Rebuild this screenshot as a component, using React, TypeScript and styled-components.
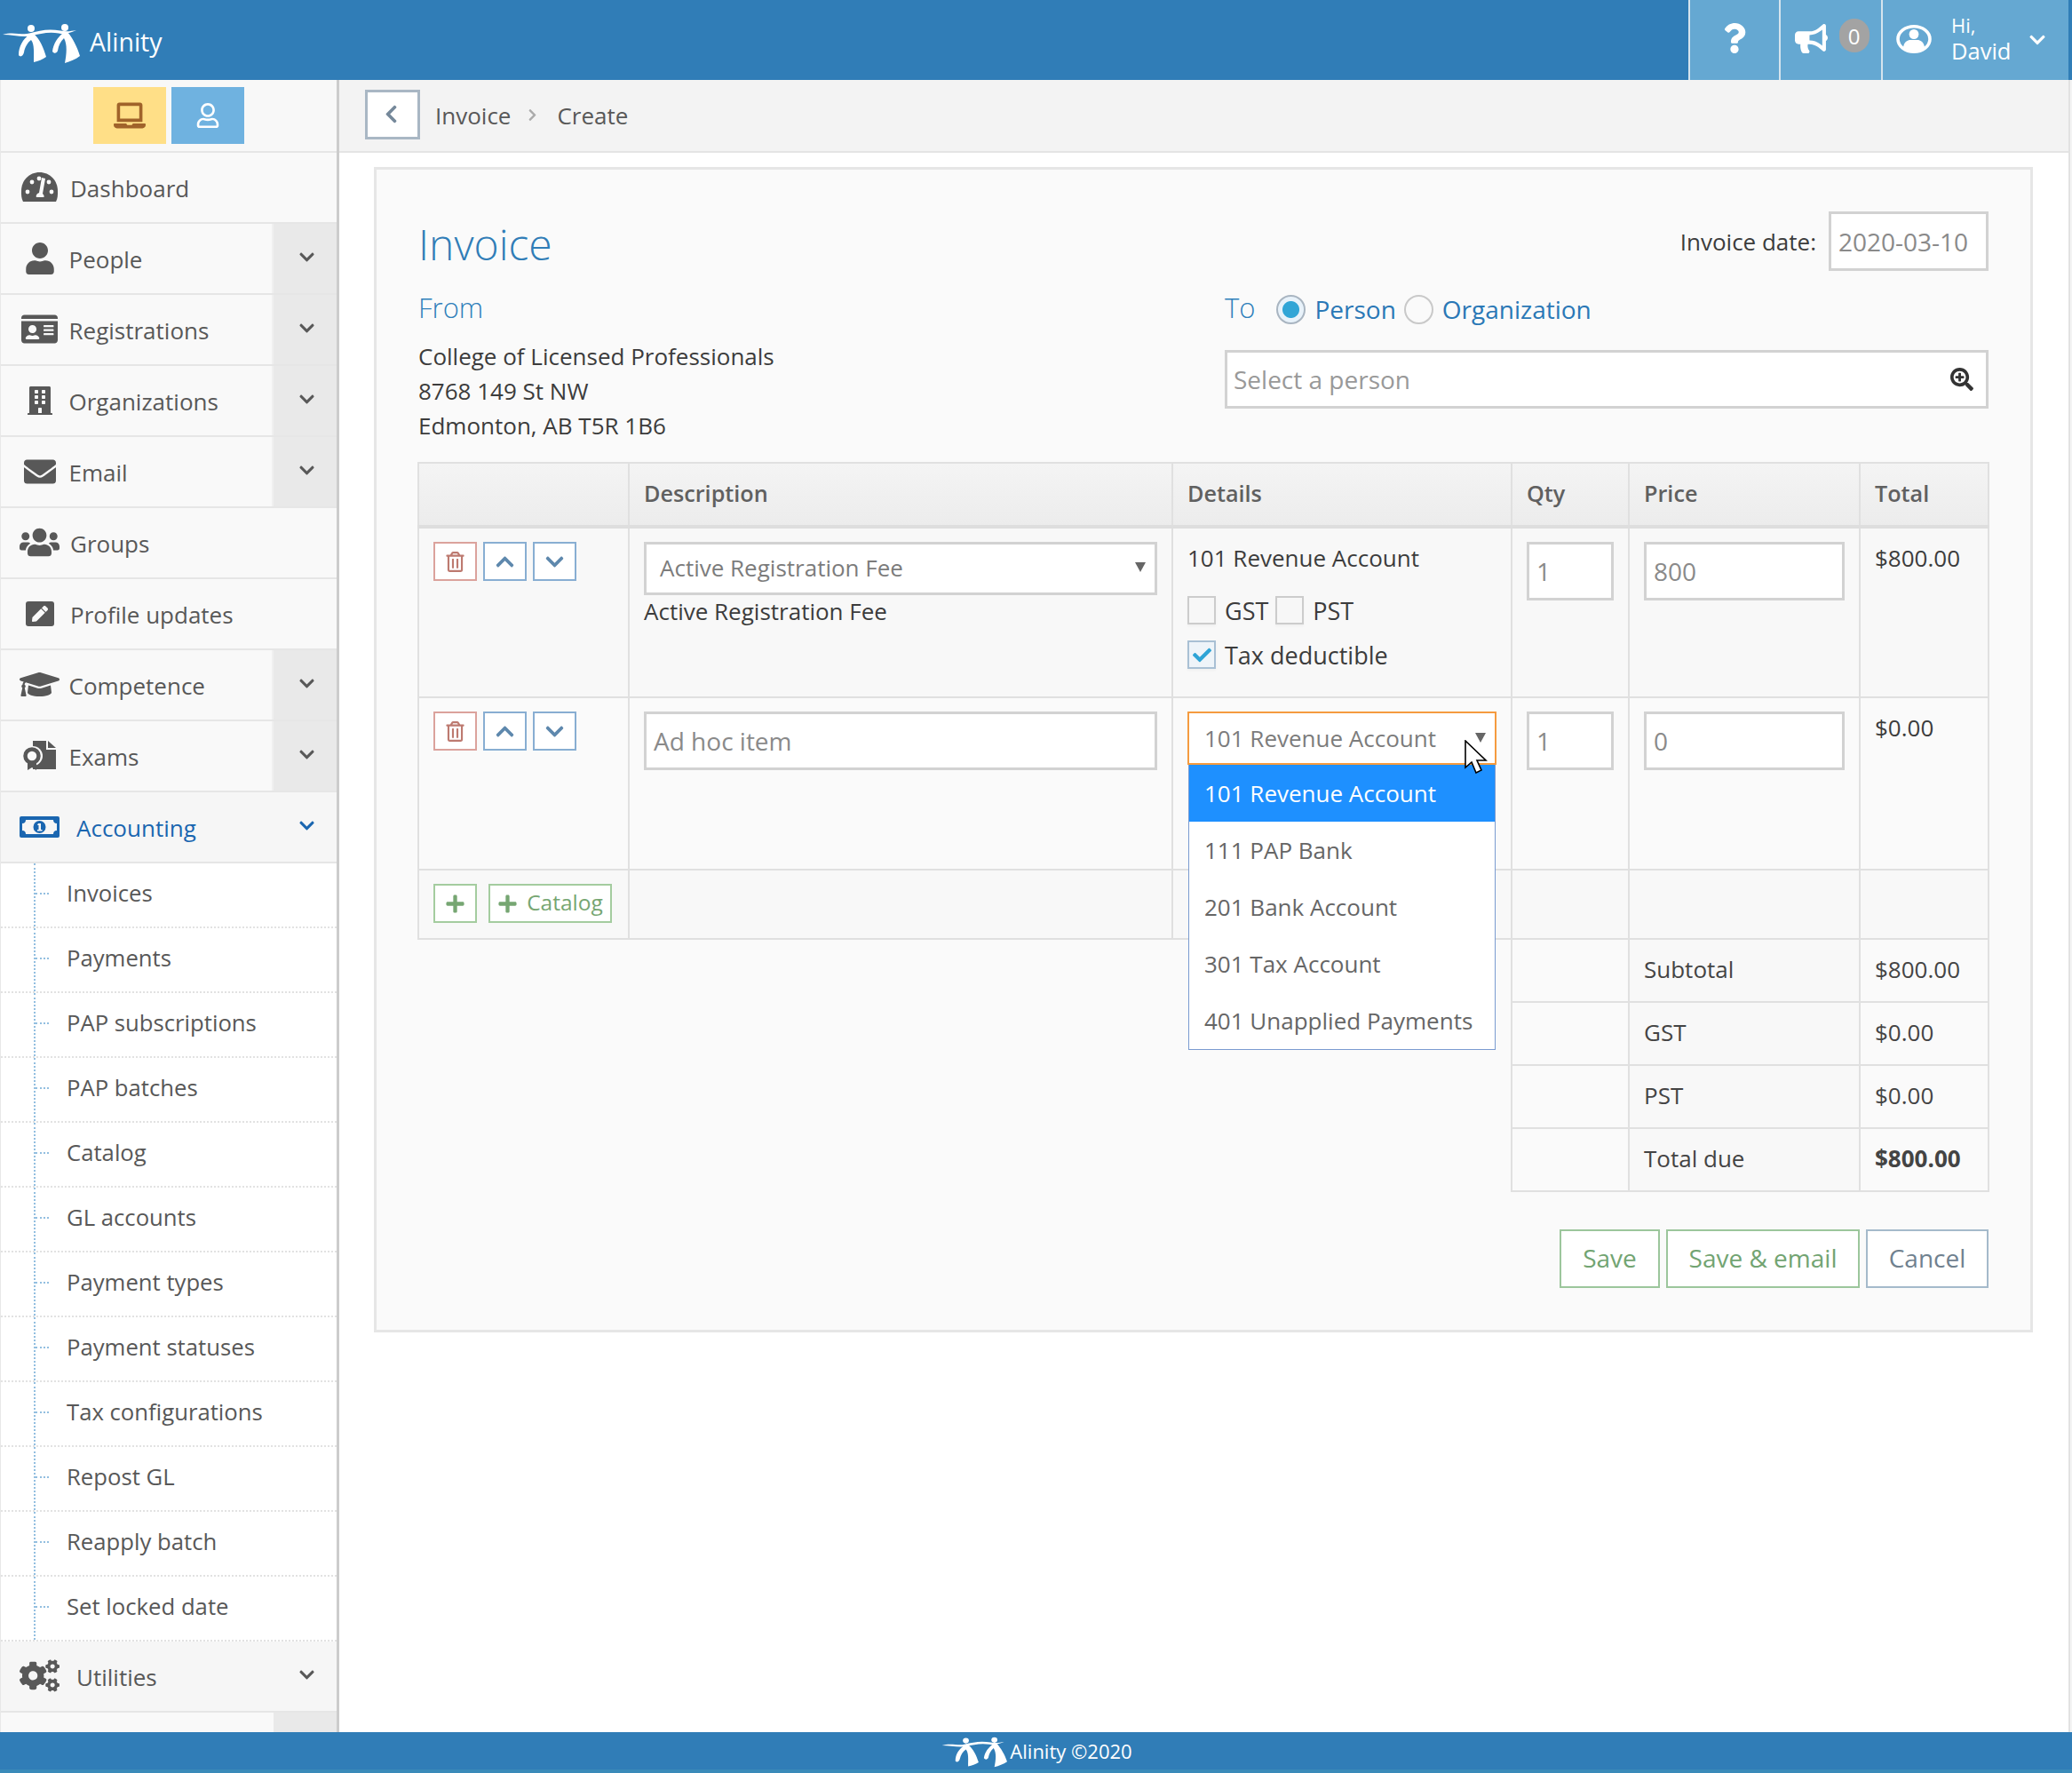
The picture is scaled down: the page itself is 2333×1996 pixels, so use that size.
import React from 'react';
import styled, { createGlobalStyle } from 'styled-components';
import {
  FaUser, FaIdCard, FaBuilding, FaEnvelope, FaUsers, FaPen, FaGraduationCap, FaCogs,
  FaChevronDown, FaChevronUp, FaChevronLeft, FaChevronRight, FaQuestion, FaBullhorn,
  FaSearchPlus, FaLaptop, FaRegUser, FaRegTrashAlt, FaPlus, FaCheck,
} from 'react-icons/fa';

const GlobalStyle = createGlobalStyle`
  html, body { margin: 0; padding: 0; background: #fff; }
  * { box-sizing: border-box; }
  body { font-family: "Open Sans", "Liberation Sans", sans-serif; color: #3c3c3c; }
`;

const BLUE = '#307db7';
const INK = '#585858';

const Page = styled.div`
  width: 2333px;
  height: 1996px;
  display: flex;
  flex-direction: column;
  overflow: hidden;
`;

const Header = styled.header`
  height: 90px;
  flex: none;
  display: flex;
  align-items: stretch;
  background: ${BLUE};
  padding-right: 4px;
  color: #fff;
`;

const Brand = styled.div`
  display: flex;
  align-items: center;
  gap: 11px;
  padding-top: 3px;
  font-size: 28.5px;
  flex: 1;
`;

const HeadBox = styled.div<{ $w: number }>`
  width: ${(p) => p.$w}px;
  background: #65a8d2;
  border-left: 2px solid #d5e4ee;
  display: flex;
  align-items: center;
  position: relative;
`;

const QuestionBox = styled(HeadBox)`
  justify-content: center;
  font-size: 34px;
  padding-bottom: 4px;
`;

const HornBox = styled(HeadBox)`
  font-size: 37px;
  padding: 0 0 4px 16px;
`;

const Count = styled.span`
  position: absolute;
  left: 66px;
  top: 21px;
  width: 34px;
  height: 38px;
  border-radius: 17px;
  background: #a3a3a3;
  font-size: 24px;
  display: flex;
  align-items: center;
  justify-content: center;
`;

const UserBox = styled(HeadBox)`
  padding-left: 15.5px;
  font-size: 20px;
`;

const Ring = styled.svg`
  width: 40px;
  height: 32px;
  flex: none;
  margin-bottom: 3px;
`;

const Greeting = styled.div`
  margin-left: 22px;
  width: 87px;
  display: flex;
  flex-direction: column;
  font-size: 22px;
  line-height: 27px;
  padding-bottom: 4px;

  b {
    font-weight: 400;
    font-size: 25.5px;
    line-height: 30px;
  }
`;

const Body = styled.div`
  flex: 1;
  display: flex;
  min-height: 0;
`;

const Sidebar = styled.nav`
  width: 382px;
  flex: none;
  border-right: 3px solid #ccc;
  border-left: 1px solid #e8e8e8;
  display: flex;
  flex-direction: column;
  overflow: hidden;
`;

const Modes = styled.div`
  height: 82px;
  flex: none;
  display: flex;
  justify-content: center;
  gap: 6px;
  padding: 8px 1px 0 0;
  background: #f8f8f8;
  border-bottom: 2px solid #e6e6e6;
`;

const ModeButton = styled.div<{ $bg: string; $fg: string; $size: number }>`
  width: 82px;
  height: 64px;
  background: ${(p) => p.$bg};
  color: ${(p) => p.$fg};
  font-size: ${(p) => p.$size}px;
  display: flex;
  align-items: center;
  justify-content: center;
`;

const NavRow = styled.div<{ $open?: boolean; $blue?: boolean }>`
  height: 80px;
  flex: none;
  display: flex;
  border-bottom: 2px solid #e6e6e6;
  background: ${(p) => (p.$open ? '#f6f6f6' : '#f9f9f9')};
  color: ${(p) => (p.$blue ? '#1a66b0' : INK)};
`;

const NavMain = styled.div<{ $wide?: boolean }>`
  flex: 1;
  display: flex;
  align-items: center;
  font-size: 26px;
  padding-top: 2px;
  border-right: ${(p) => (p.$wide ? 'none' : '2px solid #f0f0f0')};
`;

const NavIcon = styled.span<{ $size?: number; $tight?: boolean }>`
  width: ${(p) => (p.$tight ? 76.5 : 78)}px;
  flex: none;
  padding: 0 ${(p) => (p.$tight ? 9.5 : 11)}px 0 20px;
  margin-top: -3px;
  display: flex;
  justify-content: center;
  align-items: center;
  font-size: ${(p) => p.$size ?? 36}px;
`;

const NavLabel = styled.span<{ $indent?: boolean }>`
  margin-left: ${(p) => (p.$indent ? 7 : 0)}px;
`;

const NavToggle = styled.div<{ $plain?: boolean }>`
  width: 71px;
  flex: none;
  display: flex;
  align-items: center;
  justify-content: center;
  font-size: 19px;
  padding: 0 0 3px 3px;
  background: ${(p) => (p.$plain ? 'transparent' : '#e9e9e9')};
`;

const PenBox = styled.span`
  width: 32px;
  height: 28px;
  border-radius: 3px;
  background: ${INK};
  color: #f9f9f9;
  font-size: 18px;
  display: flex;
  align-items: center;
  justify-content: center;
`;

const SubList = styled.div`
  flex: none;
  background: #fff;
`;

const SubItem = styled.div`
  height: 73px;
  display: flex;
  align-items: stretch;
  padding-left: 37px;
  border-bottom: 2px dotted #e2e2e2;
  font-size: 25.7px;
  color: ${INK};
`;

const SubRail = styled.div`
  flex: 1;
  display: flex;
  align-items: center;
  padding-bottom: 4px;
  border-left: 2px dotted #93bfe0;

  &::before {
    content: '';
    width: 15px;
    margin-right: 20px;
    border-top: 2px dotted #93bfe0;
  }
`;

const NavStub = styled.div`
  flex: 1;
  display: flex;
  background: #f9f9f9;

  &::after {
    content: '';
    width: 71px;
    margin-left: auto;
    background: #e9e9e9;
  }
`;

const Main = styled.main`
  flex: 1;
  min-width: 0;
  display: flex;
  flex-direction: column;
`;

const Crumbs = styled.div`
  height: 82px;
  flex: none;
  display: flex;
  align-items: center;
  padding: 0 0 1px 29px;
  background: #f3f3f3;
  border-bottom: 2px solid #e4e4e4;
  font-size: 26px;
  color: ${INK};
`;

const BackButton = styled.div`
  width: 62px;
  height: 56px;
  border: 3px solid #a9b7c4;
  background: #fff;
  color: #75889a;
  font-size: 23px;
  margin: 0 17px 2px 0;
  padding-right: 4px;
  display: flex;
  align-items: center;
  justify-content: center;
`;

const CrumbSep = styled.span`
  margin: 0 20px 0 17px;
  font-size: 15px;
  color: #aaa;
  display: flex;
`;

const Gutter = styled.div`
  width: 4px;
  flex: none;
  background: #f4f4f4;
  border-left: 2px solid #e2e2e2;
`;

const Panel = styled.section`
  margin: 16px 40px 0 39px;
  padding: 47px;
  background: #fafafa;
  border: 3px solid #e6e6e6;
`;

const TitleRow = styled.div`
  display: flex;
  justify-content: space-between;
  height: 67px;
`;

const Title = styled.h1`
  margin: 0;
  font-size: 48px;
  font-weight: 300;
  color: ${BLUE};
  line-height: 73px;
`;

const DateField = styled.div`
  display: flex;
  align-items: center;
  gap: 14px;
  font-size: 26px;
`;

const TextBox = styled.div<{ $w?: number; $h?: number }>`
  width: ${(p) => (p.$w ? `${p.$w}px` : '100%')};
  height: ${(p) => p.$h ?? 66}px;
  background: #fff;
  border: 3px solid #d2d2d2;
  padding: 0 8px;
  font-size: 28px;
  color: #8a8a8a;
  display: flex;
  align-items: center;
`;

const Columns = styled.div`
  display: flex;
  margin-top: 20px;
`;

const FromCol = styled.div`
  width: 908px;
`;

const ToCol = styled.div`
  flex: 1;
`;

const SectionLabel = styled.div`
  height: 46px;
  display: flex;
  align-items: center;
  font-size: 31px;
  font-weight: 300;
  color: #2f80bb;
  padding-bottom: 4px;
`;

const Address = styled.div`
  margin-top: 11px;
  font-size: 26px;
  line-height: 39px;
`;

const ToRow = styled.div`
  height: 46px;
  display: flex;
  align-items: center;
  font-size: 28px;
  color: #2a78b6;
`;

const Radio = styled.span<{ $on?: boolean; $ml: number }>`
  width: 33px;
  height: 33px;
  border-radius: 50%;
  border: 2px solid ${(p) => (p.$on ? '#a9b5c1' : '#c9c9c9')};
  background: ${(p) => (p.$on ? 'radial-gradient(circle, #31a5d6 0 9px, #e8f2fa 10px)' : '#fafafa')};
  margin: 0 10px 0 ${(p) => p.$ml}px;
`;

const SearchBox = styled(TextBox)`
  margin-top: 23px;
  justify-content: space-between;
  padding: 0 14px 0 7px;
  color: #999;

  svg {
    color: #333;
    font-size: 26px;
  }
`;

const Table = styled.table`
  width: 1768px;
  margin: 21px 0 0 -1px;
  border-collapse: collapse;
  table-layout: fixed;
  font-size: 26px;

  td, th {
    border: 2px solid #e0e0e0;
    padding: 15px 16px;
    vertical-align: top;
    text-align: left;
  }
`;

const HeadRow = styled.tr`
  height: 72px;

  th {
    vertical-align: middle;
    font-size: 25.2px;
    font-weight: 600;
    color: #606060;
    background: linear-gradient(#f4f4f4, #ececec);
    border-bottom: 4px solid #dedede;
    padding-top: 0;
    padding-bottom: 3px;
  }
`;

const ItemRow = styled.tr<{ $h: number; $bg: string }>`
  height: ${(p) => p.$h}px;

  td {
    background: ${(p) => p.$bg};
  }
`;

const SumRow = styled.tr`
  height: 71px;

  td {
    vertical-align: middle;
    padding-top: 0;
    padding-bottom: 3px;
    color: #444;
    background: #fafafa;
  }

  td:nth-child(3) {
    background: #f8f8f8;
  }
`;

const BlankCell = styled.td`
  && {
    border: none;
    background: transparent;
  }
`;

const ButtonRow = styled.div`
  display: flex;
  gap: 7px;
`;

const IconButton = styled.div<{ $tone: string; $fg: string; $mr?: number; $w?: number }>`
  height: 44px;
  width: ${(p) => p.$w ?? 49}px;
  border: 2px solid ${(p) => p.$tone};
  color: ${(p) => p.$fg};
  background: #fff;
  font-size: 23px;
  margin-right: ${(p) => p.$mr ?? 0}px;
  display: flex;
  align-items: center;
  justify-content: center;
  gap: 10px;

  span {
    font-size: 24.5px;
    padding-bottom: 3px;
  }
`;

const SelectBox = styled.div<{ $focus?: boolean; $h: number; $pad: number }>`
  height: ${(p) => p.$h}px;
  background: #fff;
  border: ${(p) => (p.$focus ? '2px solid #f59b3f' : '3px solid #d2d2d2')};
  padding: 0 10px ${(p) => (p.$focus ? 1 : 3)}px ${(p) => p.$pad}px;
  color: #7c7c7c;
  font-size: 26px;
  display: flex;
  align-items: center;
  justify-content: space-between;

  i {
    border-left: 6px solid transparent;
    border-right: 6px solid transparent;
    border-top: 11px solid #666;
  }
`;

const Account = styled.div`
  line-height: 36px;
`;

const CheckLine = styled.div<{ $mt: number }>`
  display: flex;
  align-items: center;
  font-size: 27px;
  margin-top: ${(p) => p.$mt}px;
  height: 32px;
`;

const Check = styled.span<{ $on?: boolean; $ml?: number }>`
  width: 32px;
  height: 32px;
  flex: none;
  background: ${(p) => (p.$on ? '#eef4f9' : '#f7f7f7')};
  border: 2px solid ${(p) => (p.$on ? '#a9c0d4' : '#ccc')};
  box-shadow: 0 2px 2px #f0f0f0;
  color: #2ea4d6;
  font-size: 21px;
  display: flex;
  align-items: center;
  justify-content: center;
  margin: 0 10px 0 ${(p) => p.$ml ?? 0}px;
`;

const SelectWrap = styled.div`
  position: relative;
`;

const Dropdown = styled.div`
  position: absolute;
  z-index: 3;
  top: 100%;
  left: 1px;
  right: 1px;
  background: #fff;
  border: 1px solid #7a9bd0;
  border-top: none;
`;

const Option = styled.div<{ $on?: boolean }>`
  height: 64px;
  padding-left: 17px;
  display: flex;
  align-items: center;
  font-size: 26px;
  color: ${(p) => (p.$on ? '#fff' : '#666')};
  background: ${(p) => (p.$on ? '#1e90ff' : '#fff')};
`;

const Cursor = styled.svg`
  position: absolute;
  z-index: 4;
  top: 32px;
  right: 10px;
  width: 26px;
  height: 38px;
`;

const Strong = styled.b`
  font-weight: 700;
`;

const Actions = styled.div`
  margin-top: 42px;
  display: flex;
  justify-content: flex-end;
  gap: 7px;
`;

const ActionButton = styled.div<{ $cancel?: boolean; $w: number }>`
  width: ${(p) => p.$w}px;
  height: 66px;
  border: 2px solid ${(p) => (p.$cancel ? '#a5bacb' : '#9cc69c')};
  color: ${(p) => (p.$cancel ? '#70818f' : '#72a472')};
  background: #fff;
  font-size: 28px;
  display: flex;
  align-items: center;
  justify-content: center;
  padding-bottom: 2px;
`;

const Footer = styled.footer`
  height: 46px;
  flex: none;
  background: ${BLUE};
  border-bottom: 4px solid #3a8ab9;
  color: #fff;
  font-size: 22px;
  display: flex;
  align-items: center;
  justify-content: center;
  gap: 3px;
`;

const LogoMark = ({ w, h }: { w: number; h: number }) => (
  <svg width={w} height={h} viewBox="0 20 90 50" fill="#fff" preserveAspectRatio="none">
    <circle cx="35" cy="30" r="4" />
    <circle cx="73" cy="29" r="4" />
    <path d="M3 37C15 33 25 38 33 35.5C45 32 55 30 68 32.5C75 34 80 33 86 32C78 35.5 72 37 66 35.5C55 33.5 45 36 35 38.5C25 40.5 14 37 3 37Z" />
    <path d="M33 37C26 42 21 50 21 60C23 63 26 61 27 57C28 51 31 46 35 43C39 48 38 58 38 68C43 67 48 65 52 62C49 52 45 42 38 36Z" />
    <path d="M71 35C65 40 60 47 59 56C61 59 64 58 65 55C66 49 68 45 72 41C76 48 75 59 73 69C79 67 85 65 90 61C87 51 82 41 76 34Z" />
  </svg>
);

const GaugeIcon = () => (
  <svg width="41" height="33" viewBox="0 0 41 33">
    <path fill={INK} d="M2 33C0 29 0 26 0 21C0 9 9 0 20.5 0S41 9 41 21C41 26 41 29 39 33Z" />
    <g fill="#f9f9f9">
      <circle cx="7" cy="22" r="2.4" />
      <circle cx="12" cy="11" r="2.4" />
      <circle cx="20" cy="7" r="2.4" />
      <circle cx="34" cy="22" r="2.4" />
      <circle cx="31" cy="11" r="2.4" />
      <path d="M23 6L27 7L24 24C26 26 26 28 25 28H17C16 27 17 24 20 23Z" />
    </g>
  </svg>
);

const CertIcon = () => (
  <svg width="37" height="33" viewBox="0 0 37 33">
    <path fill={INK} d="M11 0H26V10H37V32H11Z" />
    <path fill={INK} d="M28 0L37 8H28Z" />
    <circle cx="11" cy="17" r="11" fill="#f9f9f9" />
    <circle cx="10" cy="17" r="7.5" fill="none" stroke={INK} strokeWidth="4.5" />
    <path fill={INK} d="M5 24H15V33L10 30L5 33Z" />
  </svg>
);

const BillIcon = () => (
  <svg width="45" height="24" viewBox="0 0 45 24">
    <rect width="45" height="24" rx="2" fill="#1a66b0" />
    <path fill="#f6f6f6" d="M7 4H38C38 6 39 8 42 8V16C39 16 38 18 38 20H7C7 18 6 16 3 16V8C6 8 7 6 7 4Z" />
    <circle cx="22.5" cy="12" r="7" fill="#1a66b0" />
    <path fill="#f6f6f6" d="M21 8H24V15H25.5V16.5H20V15H21.5V10H20Z" />
  </svg>
);

const UserRing = () => (
  <Ring viewBox="0 0 40 32">
    <ellipse cx="20" cy="16" rx="18" ry="14.2" fill="none" stroke="#fff" strokeWidth="3.6" />
    <ellipse cx="20" cy="10.5" rx="5.4" ry="5.6" fill="#fff" />
    <path fill="#fff" d="M8 25C9 19 13 17 16 17H24C27 17 31 19 32 25C28 29 24 30 20 30C16 30 12 29 8 25Z" />
  </Ring>
);

const navTop = [
  { label: 'Dashboard', icon: <GaugeIcon /> },
  { label: 'People', icon: <FaUser />, size: 36, more: true },
  { label: 'Registrations', icon: <FaIdCard />, size: 41, more: true },
  { label: 'Organizations', icon: <FaBuilding />, size: 32, more: true },
  { label: 'Email', icon: <FaEnvelope />, size: 36, more: true },
  { label: 'Groups', icon: <FaUsers />, size: 45 },
  { label: 'Profile updates', icon: <PenBox><FaPen /></PenBox> },
  { label: 'Competence', icon: <FaGraduationCap />, size: 45, more: true },
  { label: 'Exams', icon: <CertIcon />, more: true },
];

const subItems = [
  'Invoices', 'Payments', 'PAP subscriptions', 'PAP batches', 'Catalog', 'GL accounts',
  'Payment types', 'Payment statuses', 'Tax configurations', 'Repost GL', 'Reapply batch', 'Set locked date',
];

const options = ['101 Revenue Account', '111 PAP Bank', '201 Bank Account', '301 Tax Account', '401 Unapplied Payments'];

const RowButtons = () => (
  <ButtonRow>
    <IconButton $tone="#dba29c" $fg="#bd7a70"><FaRegTrashAlt /></IconButton>
    <IconButton $tone="#88aed2" $fg="#5e88ad"><FaChevronUp /></IconButton>
    <IconButton $tone="#88aed2" $fg="#5e88ad"><FaChevronDown /></IconButton>
  </ButtonRow>
);

export default function App() {
  return (
    <Page>
      <GlobalStyle />
      <Header>
        <Brand>
          <LogoMark w={90} h={50} />
          Alinity
        </Brand>
        <QuestionBox $w={102}><FaQuestion /></QuestionBox>
        <HornBox $w={115}>
          <FaBullhorn />
          <Count>0</Count>
        </HornBox>
        <UserBox $w={211.5}>
          <UserRing />
          <Greeting>Hi,<b>David</b></Greeting>
          <FaChevronDown />
        </UserBox>
      </Header>

      <Body>
        <Sidebar>
          <Modes>
            <ModeButton $bg="#ffdf87" $fg="#a0632a" $size={36}><FaLaptop /></ModeButton>
            <ModeButton $bg="#6fb2e0" $fg="#fff" $size={28}><FaRegUser /></ModeButton>
          </Modes>
          {navTop.map((item) => (
            <NavRow key={item.label}>
              <NavMain $wide={!item.more}>
                <NavIcon $size={item.size} $tight={item.more}>{item.icon}</NavIcon>
                {item.label}
              </NavMain>
              {item.more && <NavToggle><FaChevronDown /></NavToggle>}
            </NavRow>
          ))}
          <NavRow $open $blue>
            <NavMain $wide>
              <NavIcon><BillIcon /></NavIcon>
              <NavLabel $indent>Accounting</NavLabel>
            </NavMain>
            <NavToggle $plain><FaChevronDown /></NavToggle>
          </NavRow>
          <SubList>
            {subItems.map((s) => <SubItem key={s}><SubRail>{s}</SubRail></SubItem>)}
          </SubList>
          <NavRow $open>
            <NavMain $wide>
              <NavIcon $size={45}><FaCogs /></NavIcon>
              <NavLabel $indent>Utilities</NavLabel>
            </NavMain>
            <NavToggle $plain><FaChevronDown /></NavToggle>
          </NavRow>
          <NavStub />
        </Sidebar>

        <Main>
          <Crumbs>
            <BackButton><FaChevronLeft /></BackButton>
            Invoice
            <CrumbSep><FaChevronRight /></CrumbSep>
            Create
          </Crumbs>
          <Panel>
            <TitleRow>
              <Title>Invoice</Title>
              <DateField>
                Invoice date:
                <TextBox $w={180} $h={67}>2020-03-10</TextBox>
              </DateField>
            </TitleRow>
            <Columns>
              <FromCol>
                <SectionLabel>From</SectionLabel>
                <Address>
                  College of Licensed Professionals<br />
                  8768 149 St NW<br />
                  Edmonton, AB T5R 1B6
                </Address>
              </FromCol>
              <ToCol>
                <ToRow>
                  <SectionLabel>To</SectionLabel>
                  <Radio $on $ml={24} />Person
                  <Radio $ml={9} />Organization
                </ToRow>
                <SearchBox>Select a person<FaSearchPlus /></SearchBox>
              </ToCol>
            </Columns>

            <Table>
              <colgroup>
                <col width="237" />
                <col width="612" />
                <col width="382" />
                <col width="132" />
                <col width="260" />
                <col width="145" />
              </colgroup>
              <thead>
                <HeadRow>
                  <th />
                  <th>Description</th>
                  <th>Details</th>
                  <th>Qty</th>
                  <th>Price</th>
                  <th>Total</th>
                </HeadRow>
              </thead>
              <tbody>
                <ItemRow $h={192} $bg="#f8f8f8">
                  <td><RowButtons /></td>
                  <td>
                    <SelectBox $h={60} $pad={15}>Active Registration Fee<i /></SelectBox>
                    Active Registration Fee
                  </td>
                  <td>
                    <Account>101 Revenue Account</Account>
                    <CheckLine $mt={25}>
                      <Check />GST
                      <Check $ml={8} />PST
                    </CheckLine>
                    <CheckLine $mt={18}>
                      <Check $on><FaCheck /></Check>Tax deductible
                    </CheckLine>
                  </td>
                  <td><TextBox>1</TextBox></td>
                  <td><TextBox>800</TextBox></td>
                  <td>$800.00</td>
                </ItemRow>
                <ItemRow $h={194} $bg="#fafafa">
                  <td><RowButtons /></td>
                  <td><TextBox>Ad hoc item</TextBox></td>
                  <td>
                    <SelectWrap>
                      <SelectBox $focus $h={60} $pad={17}>101 Revenue Account<i /></SelectBox>
                      <Dropdown>
                        {options.map((o, i) => <Option key={o} $on={i === 0}>{o}</Option>)}
                      </Dropdown>
                      <Cursor viewBox="0 0 26 38">
                        <path d="M1 1V31L8 25L13 37L19 34L14 23H24Z" fill="#fff" stroke="#000" strokeWidth="1.6" />
                      </Cursor>
                    </SelectWrap>
                  </td>
                  <td><TextBox>1</TextBox></td>
                  <td><TextBox>0</TextBox></td>
                  <td>$0.00</td>
                </ItemRow>
                <ItemRow $h={78} $bg="#f8f8f8">
                  <td>
                    <ButtonRow>
                      <IconButton $tone="#a4cc9f" $fg="#76a672" $mr={6}><FaPlus /></IconButton>
                      <IconButton $tone="#a4cc9f" $fg="#76a672" $w={139}><FaPlus /><span>Catalog</span></IconButton>
                    </ButtonRow>
                  </td>
                  <td /><td /><td /><td /><td />
                </ItemRow>
                <SumRow><BlankCell colSpan={3} /><td /><td>Subtotal</td><td>$800.00</td></SumRow>
                <SumRow><BlankCell colSpan={3} /><td /><td>GST</td><td>$0.00</td></SumRow>
                <SumRow><BlankCell colSpan={3} /><td /><td>PST</td><td>$0.00</td></SumRow>
                <SumRow><BlankCell colSpan={3} /><td /><td>Total due</td><td><Strong>$800.00</Strong></td></SumRow>
              </tbody>
            </Table>

            <Actions>
              <ActionButton $w={113}>Save</ActionButton>
              <ActionButton $w={218}>Save &amp; email</ActionButton>
              <ActionButton $w={138} $cancel>Cancel</ActionButton>
            </Actions>
          </Panel>
        </Main>
        <Gutter />
      </Body>

      <Footer>
        <LogoMark w={76} h={38} />
        Alinity ©2020
      </Footer>
    </Page>
  );
}
